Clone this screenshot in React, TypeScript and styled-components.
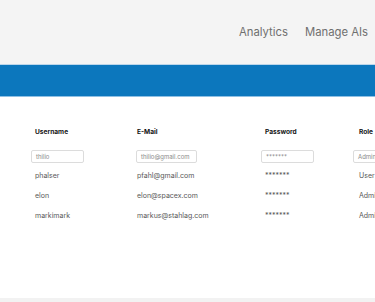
import React from "react";
import styled, { createGlobalStyle } from "styled-components";

const Global = createGlobalStyle`
  html, body { margin: 0; padding: 0; overflow: hidden; background: #ffffff; }
  body { font-family: Inter, "Noto Sans", "Liberation Sans", sans-serif; }
  * { box-sizing: border-box; }
`;

const Page = styled.div`
  width: 375px;
  height: 302px;
  display: flex;
  flex-direction: column;
  overflow: hidden;
`;

const TopBar = styled.header`
  height: 64px;
  flex: none;
  background: #f4f4f4;
  display: flex;
  justify-content: flex-end;
  align-items: center;
  gap: 17px;
  padding: 2px 7px 0 0;
`;

const NavLink = styled.a`
  font-size: 11.3px;
  line-height: 1;
  color: #6f6f6f;
  text-decoration: none;
  white-space: nowrap;
`;

const Band = styled.div`
  height: 33px;
  flex: none;
  background: #0c77bd;
  border-top: 1px solid #bcd6ea;
  border-bottom: 1px solid #8fc0e4;
`;

const Main = styled.main`
  flex: 1;
  background: #ffffff;
  padding-top: 28px;
  overflow: hidden;
`;

const Footer = styled.footer`
  height: 4px;
  flex: none;
  background: #f2f2f2;
`;

const Row = styled.div<{ $h: number; $mt?: number }>`
  display: grid;
  grid-template-columns: 31px 105px 125px 92px 120px;
  height: ${(p) => p.$h}px;
  margin-top: ${(p) => p.$mt ?? 0}px;
  align-items: center;
  width: 480px;
`;

const Cell = styled.div<{ $pad: number }>`
  padding-left: ${(p) => p.$pad}px;
  white-space: nowrap;
  display: flex;
  align-items: center;
  line-height: 1;
  font-size: 7px;
`;

const HeadText = styled.span`
  font-size: 6.6px;
  font-weight: 700;
  color: #141414;
`;

const DataText = styled.span`
  font-size: 7px;
  color: #575757;
`;

const Field = styled.div<{ $w: number }>`
  width: ${(p) => p.$w}px;
  height: 13px;
  border: 1px solid #dcdcdc;
  border-radius: 2px;
  display: flex;
  align-items: center;
  padding-left: 4px;
  font-size: 6px;
  color: #8a8a8a;
  background: #fff;
  overflow: hidden;
  white-space: nowrap;
`;

const pads = [4, 1, 4, 6];
const fieldWidths = [53, 61, 53, 40];

const users = [
  ["phalser", "pfahl@gmail.com", "*******", "User"],
  ["elon", "elon@spacex.com", "*******", "Admin"],
  ["markimark", "markus@stahlag.com", "*******", "Admin"],
];

export default function App() {
  return (
    <>
      <Global />
      <Page>
        <TopBar>
          <NavLink>Analytics</NavLink>
          <NavLink>Manage AIs</NavLink>
        </TopBar>
        <Band />
        <Main>
          <Row $h={14}>
            <span />
            {["Username", "E-Mail", "Password", "Role"].map((h, i) => (
              <Cell key={h} $pad={pads[i]}>
                <HeadText>{h}</HeadText>
              </Cell>
            ))}
          </Row>
          <Row $h={15} $mt={10}>
            <span />
            {["thilio", "thilio@gmail.com", "*******", "Admin"].map((v, i) => (
              <Cell key={i} $pad={0}>
                <Field $w={fieldWidths[i]}>{v}</Field>
              </Cell>
            ))}
          </Row>
          {users.map((u, r) => (
            <Row $h={20} $mt={r === 0 ? 1 : 0} key={u[0]}>
              <span />
              {u.map((v, i) => (
                <Cell key={i} $pad={pads[i]}>
                  <DataText>{v}</DataText>
                </Cell>
              ))}
            </Row>
          ))}
        </Main>
        <Footer />
      </Page>
    </>
  );
}
